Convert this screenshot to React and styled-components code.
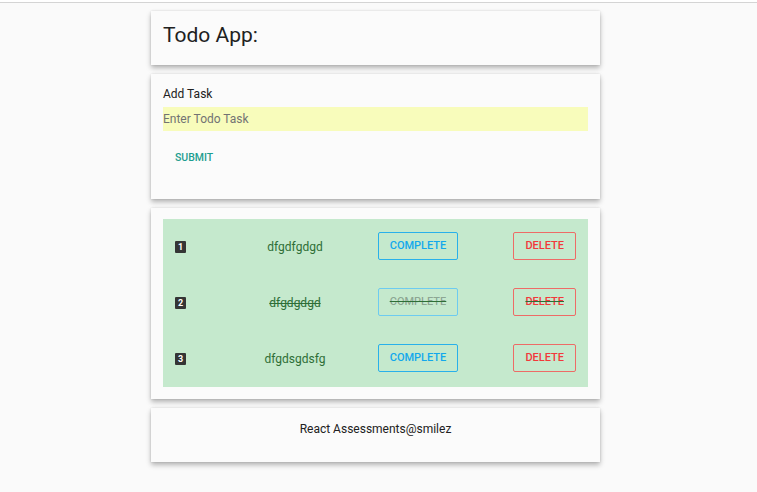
import React from "react";
import styled, { createGlobalStyle } from "styled-components";

const Global = createGlobalStyle`
  html, body { margin: 0; padding: 0; }
  body {
    background: #fafafa;
    font-family: Roboto, "Liberation Sans", sans-serif;
    color: #212121;
    width: 757px;
    min-height: 492px;
  }
`;

const Page = styled.div`
  min-height: 492px;
  border-top: 2px solid #ffffff;
  box-sizing: border-box;
`;

const TopRule = styled.div`
  height: 1px;
  background: #d4d4d4;
`;

const Column = styled.main`
  width: 449px;
  margin: 8px 0 0 151px;
  display: flex;
  flex-direction: column;
  gap: 9px;
`;

const Card = styled.section`
  background: #fbfbfb;
  box-shadow: 0 3px 5px rgba(0, 0, 0, 0.28), 0 0 2px rgba(0, 0, 0, 0.12);
  padding: ${(p) => p.$pad || "12px"};
  box-sizing: border-box;
  min-height: ${(p) => p.$h || "auto"};
  text-align: ${(p) => p.$align || "left"};
`;

const Title = styled.h1`
  margin: 0;
  font-size: 21px;
  font-weight: 400;
  line-height: 30px;
  color: #212121;
`;

const Label = styled.label`
  display: block;
  font-size: 12px;
  line-height: 16px;
  color: #212121;
  margin-bottom: 5px;
`;

const Input = styled.input`
  display: block;
  width: 100%;
  box-sizing: border-box;
  height: 24px;
  border: none;
  outline: none;
  background: #f8fcbb;
  padding: 0;
  font-family: Roboto, "Liberation Sans", sans-serif;
  font-size: 12px;
  color: #212121;
  &::placeholder { color: #737373; }
`;

const FlatButton = styled.button`
  display: block;
  margin-top: 8px;
  height: 36px;
  padding: 0 12px;
  border: none;
  background: transparent;
  font-family: Roboto, "Liberation Sans", sans-serif;
  font-size: 10.5px;
  font-weight: 500;
  color: #1e9e90;
  text-transform: uppercase;
`;

const List = styled.ul`
  list-style: none;
  margin: 0;
  padding: 0;
  background: #c5e9cd;
`;

const Row = styled.li`
  display: grid;
  grid-template-columns: 50px 140px 106px 1fr;
  align-items: center;
  height: 56px;
  padding: 0 12px;
  box-sizing: border-box;
`;

const Badge = styled.span`
  justify-self: start;
  width: 11px;
  height: 12px;
  border-radius: 1px;
  background: #353535;
  color: #fff;
  font-size: 9px;
  font-weight: 700;
  line-height: 12px;
  text-align: center;
`;

const TaskText = styled.span`
  justify-self: center;
  font-size: 12px;
  color: #2e6e36;
  text-decoration: ${(p) => (p.$done ? "line-through" : "none")};
  text-decoration-color: #2e6e36;
`;

const OutlineButton = styled.button`
  justify-self: ${(p) => p.$justify || "center"};
  height: 28px;
  margin-bottom: 3px;
  padding: 0 11px;
  background: transparent;
  border: 1px solid ${(p) => p.$border};
  border-radius: 2px;
  font-family: Roboto, "Liberation Sans", sans-serif;
  font-size: 11px;
  font-weight: 500;
  color: ${(p) => p.$color};
  text-transform: uppercase;
  text-decoration: ${(p) => (p.$done ? "line-through" : "none")};
  text-decoration-color: #2e6e36;
`;

const Footer = styled.p`
  margin: 0;
  font-size: 12px;
  line-height: 16px;
  color: #212121;
`;

const tasks = [
  { id: 1, text: "dfgdfgdgd", done: false },
  { id: 2, text: "dfgdgdgd", done: true },
  { id: 3, text: "dfgdsgdsfg", done: false },
];

export default function App() {
  return (
    <>
      <Global />
      <Page>
        <TopRule />
        <Column>
          <Card $pad="9px 12px" $h="54px">
            <Title>Todo App:</Title>
          </Card>
          <Card $pad="12px 12px 24px" $h="124px">
            <Label>Add Task</Label>
            <Input placeholder="Enter Todo Task" />
            <FlatButton>Submit</FlatButton>
          </Card>
          <Card $pad="11px 12px 12px">
            <List>
              {tasks.map((t) => (
                <Row key={t.id}>
                  <Badge>{t.id}</Badge>
                  <TaskText $done={t.done}>{t.text}</TaskText>
                  <OutlineButton
                    $color={t.done ? "rgba(0,0,0,0.3)" : "#12a8ec"}
                    $border={t.done ? "#6dcbf0" : "#29b0ea"}
                    $done={t.done}
                  >
                    Complete
                  </OutlineButton>
                  <OutlineButton
                    $justify="end"
                    $color="#f2383a"
                    $border="#ee6b66"
                    $done={t.done}
                  >
                    Delete
                  </OutlineButton>
                </Row>
              ))}
            </List>
          </Card>
          <Card $pad="13px 12px" $h="54px" $align="center">
            <Footer>React Assessments@smilez</Footer>
          </Card>
        </Column>
      </Page>
    </>
  );
}
